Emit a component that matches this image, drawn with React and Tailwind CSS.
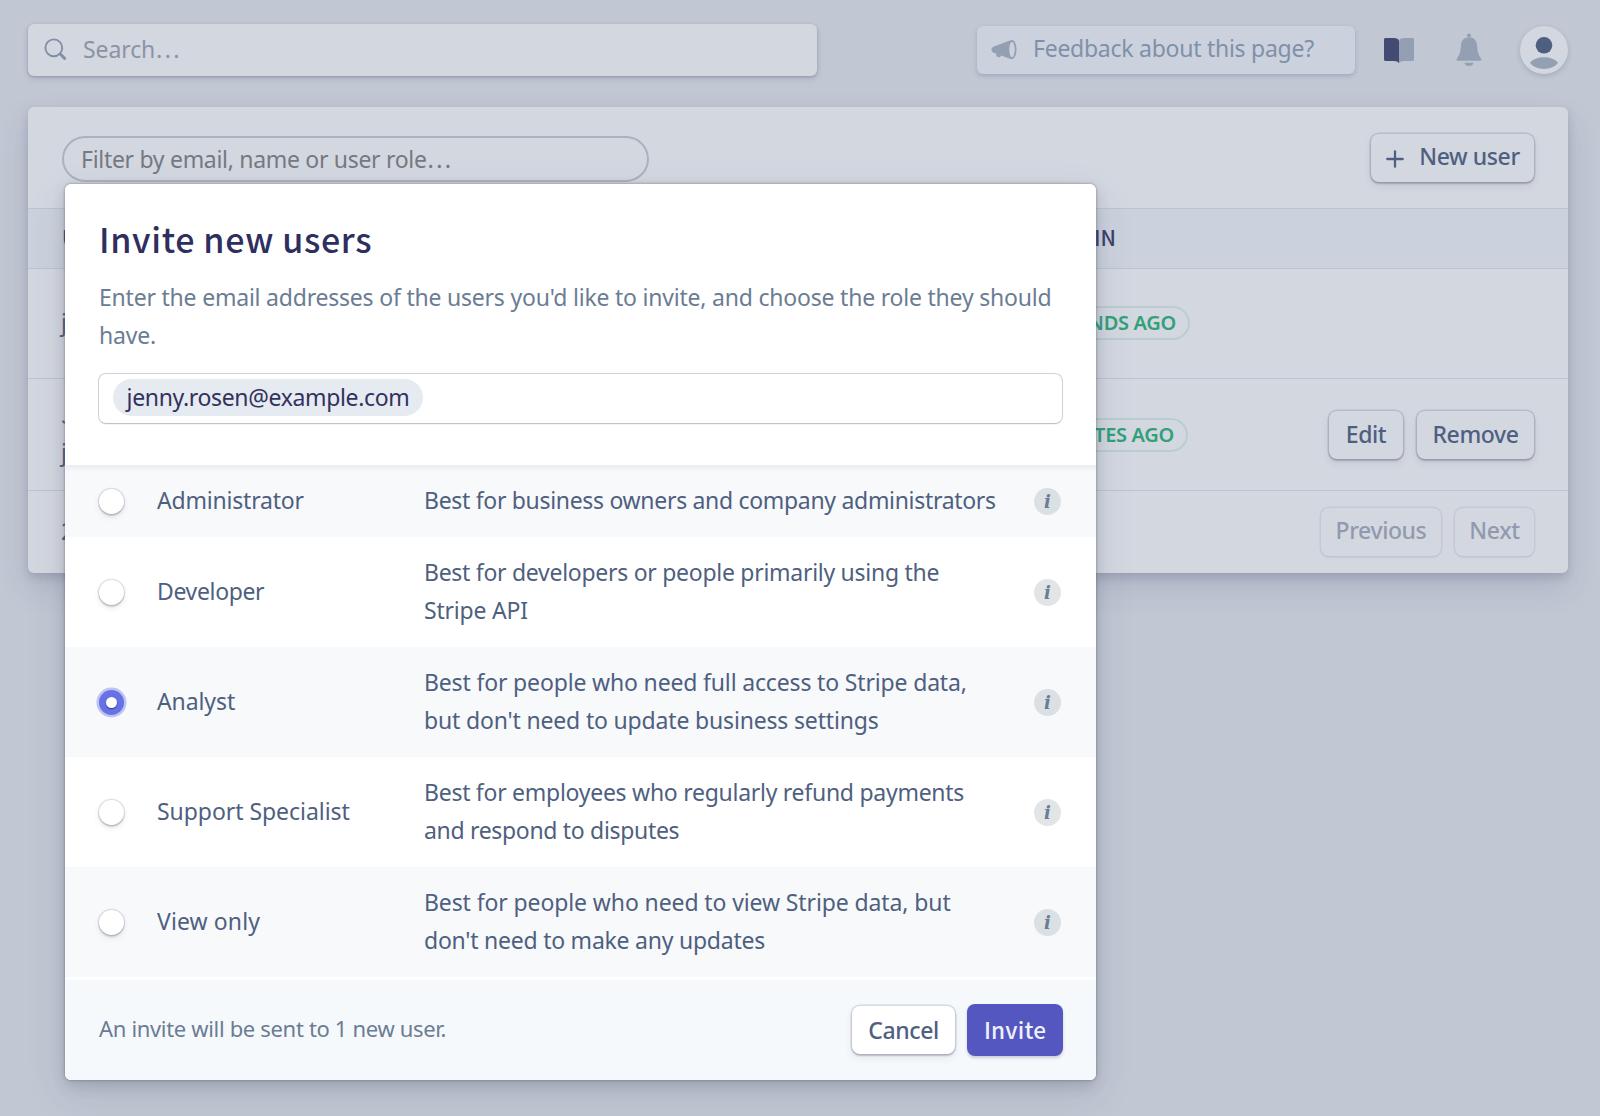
import React from "react";

const ROLES = [
  {
    name: "Administrator",
    nameTracking: "tracking-[-0.2px]",
    lines: [["Best for business owners and company administrators", "tracking-[-0.31px]"]],
  },
  {
    name: "Developer",
    nameTracking: "tracking-[-0.35px]",
    lines: [
      ["Best for developers or people primarily using the", "tracking-[-0.28px]"],
      ["Stripe API", "tracking-[-0.2px]"],
    ],
  },
  {
    name: "Analyst",
    nameTracking: "tracking-[-0.1px]",
    selected: true,
    lines: [
      ["Best for people who need full access to Stripe data,", "tracking-[-0.16px]"],
      ["but don't need to update business settings", "tracking-[-0.17px]"],
    ],
  },
  {
    name: "Support Specialist",
    nameTracking: "tracking-[-0.05px]",
    lines: [
      ["Best for employees who regularly refund payments", "tracking-[-0.27px]"],
      ["and respond to disputes", "tracking-[-0.32px]"],
    ],
  },
  {
    name: "View only",
    nameTracking: "tracking-[0.1px]",
    lines: [
      ["Best for people who need to view Stripe data, but", "tracking-[-0.11px]"],
      ["don't need to make any updates", "tracking-[-0.24px]"],
    ],
  },
];

function SearchIcon() {
  return (
    <svg className="h-6 w-6 shrink-0" viewBox="0 0 24 24" fill="none" stroke="#8090a8" strokeLinecap="round">
      <circle cx="9.8" cy="9.8" r="8.4" strokeWidth="1.9" />
      <path d="M16.5 16.300 20.600 20.400" strokeWidth="3" />
    </svg>
  );
}

function MegaphoneIcon() {
  return (
    <svg className="h-6 w-[26px] shrink-0" viewBox="0 0 26 24">
      <path
        fill="#93a0b3"
        d="M20.8 2c2.7 0 4.7 4.2 4.7 9.6s-2 9.6-4.7 9.6c-.7 0-1.3-.2-2-.5L10 17.600l-.6 1.100c-.3.6-.9.8-1.500.6l-2-.8c-.6-.2-.9-.9-.7-1.500l.300-1.200-2.200-.900C1.700 14.300.4 13.200.4 11.700s1-2.400 2.500-3.200L19 2.500c.6-.3 1.200-.5 1.800-.5z"
      />
      <ellipse cx="21" cy="11.600" rx="2.700" ry="7.600" fill="#cbd2dd" />
    </svg>
  );
}

function BookIcon() {
  return (
    <svg className="h-[27px] w-[30px]" viewBox="0 0 30 27">
      <path fill="#444b73" d="M1.500 1H10c2.500 0 5 1.200 5 3.200V26.200c-1-1.500-2.500-2.200-5-2.200H1.500C.7 24 0 23.300 0 22.500v-20C0 1.700.7 1 1.500 1z" />
      <path fill="#93a0b3" d="M28.500 1H20c-2.500 0-5 1.200-5 3.200V26.200c1-1.500 2.500-2.200 5-2.200h8.500c.8 0 1.500-.7 1.500-1.500v-20c0-.8-.7-1.500-1.500-1.500z" />
    </svg>
  );
}

function BellIcon() {
  return (
    <svg className="h-[34px] w-[26px]" viewBox="0 0 26 34" fill="#93a0b3">
      <circle cx="13" cy="2.500" r="2" />
      <path d="M13 4.300c4.800 0 7.600 3.300 8 7.700.500 6 1 9.500 4 13.400.9 1.300.5 2.300-.8 2.300H1.800c-1.300 0-1.700-1-.8-2.300 3-3.900 3.500-7.400 4-13.400.4-4.400 3.200-7.700 8-7.700z" />
      <path d="M8.300 29.700h9.400c-.5 2-2.400 3.300-4.700 3.300s-4.200-1.300-4.700-3.300z" />
    </svg>
  );
}

function Avatar() {
  return (
    <svg className="h-12 w-12 rounded-full shadow-[0_2px_5px_rgba(60,66,87,0.2)]" viewBox="0 0 48 48">
      <circle cx="24" cy="24" r="24" fill="#d3d7e0" />
      <circle cx="24" cy="19.300" r="8.300" fill="#4f5f80" />
      <path fill="#93a0b3" d="M10 36.800C13 33 18 31.200 24 31.200s11 1.800 14 5.600c-3 4-8 6.200-14 6.200s-11-2.200-14-6.200z" />
    </svg>
  );
}

function PlusIcon() {
  return (
    <svg className="h-[18px] w-[18px]" viewBox="0 0 18 18" stroke="#4f5f80" strokeWidth="2.300" strokeLinecap="round">
      <path d="M9 1.300v15.400M1.300 9h15.400" />
    </svg>
  );
}

function Ellipsis() {
  return <span className="font-['Noto_Sans_CJK_SC',sans-serif] leading-none">…</span>;
}

function Radio({ selected }) {
  if (selected) {
    return (
      <span className="flex h-[25px] w-[25px] shrink-0 items-center justify-center rounded-full bg-[#6772e5] shadow-[0_0_0_2.5px_rgba(103,114,229,0.4)]">
        <span className="h-[11px] w-[11px] rounded-full bg-white shadow-[0_1px_1.5px_rgba(20,20,80,0.6)]" />
      </span>
    );
  }
  return (
    <span className="h-[25px] w-[25px] shrink-0 rounded-full bg-white shadow-[0_0_0_1.2px_rgba(60,66,87,0.14),0_2px_2px_rgba(0,0,0,0.14),0_3px_6px_rgba(60,66,87,0.1)]" />
  );
}

function InfoBadge() {
  return (
    <span className="flex h-[27px] w-[27px] shrink-0 items-center justify-center rounded-full bg-[#8796a0]/25 font-['DejaVu_Serif',serif] text-[18px] leading-[27px] font-bold text-[#6b7c93] italic">
      i
    </span>
  );
}

const BUTTON = "flex h-12 items-center justify-center rounded-lg text-[23px] font-medium tracking-[-0.4px] text-[#4f5f80] ";
const RAISED = "shadow-[0_0_0_1.5px_rgba(60,50,90,0.15),0_2px_2px_rgba(30,20,60,0.17),0_4px_8px_rgba(60,66,87,0.09)] ";
const FLAT = "shadow-[0_0_0_1.5px_rgba(60,50,90,0.14),0_2px_2px_rgba(30,20,60,0.05)] ";

function Button({ className, disabled, children }) {
  return <button className={BUTTON + (disabled ? FLAT : RAISED) + className}>{children}</button>;
}

function Badge({ children }) {
  return (
    <span className="flex h-[34px] items-center rounded-full border-2 border-[#bbcdd0] px-[12px] text-[20px] font-semibold tracking-[-0.3px] text-[#31a07b]">
      {children}
    </span>
  );
}

function TopBar() {
  return (
    <header className="flex h-[107px] items-start pr-8 pl-7">
      <div className="mt-6 flex h-[52px] w-[789px] items-center gap-[15px] rounded-md bg-[#d3d7e0] pl-4 shadow-[0_1px_3px_rgba(60,66,107,0.3),0_3px_6px_rgba(60,66,107,0.12)]">
        <SearchIcon />
        <span className="pb-[3px] text-[23px] leading-8 tracking-[-0.1px] text-[#8c93a5]">
          Search
          <Ellipsis />
        </span>
      </div>
      <div className="mt-[26px] ml-[160px] flex h-12 w-[378px] items-center gap-[16px] rounded-md bg-[#cbd2dd] pl-[14px] shadow-[0_2px_4px_rgba(60,66,107,0.22)]">
        <MegaphoneIcon />
        <span className="pb-[4px] text-[23px] tracking-[-0.26px] text-[#8090a8]">Feedback about this page?</span>
      </div>
      <div className="mt-[26px] ml-[29px] flex h-12 flex-1 items-center">
        <BookIcon />
        <span className="ml-[42px]">
          <BellIcon />
        </span>
        <span className="ml-auto">
          <Avatar />
        </span>
      </div>
    </header>
  );
}

function UsersCard() {
  return (
    <section className="mr-8 ml-7 flex h-[466px] flex-col rounded-md bg-[#d3d7e0] text-[23px] text-[#4f5f80] shadow-[0_14px_30px_rgba(60,66,107,0.15),0_4px_9px_rgba(40,46,80,0.17)]">
      <div className="flex h-[101px] items-start justify-between pr-[34px] pl-[34px]">
        <div className="mt-[29px] flex h-[46px] w-[587px] items-center rounded-full border-2 border-[#acb1be] pb-[1px] pl-[17px] leading-8 tracking-[-0.3px] text-[#757982]">
          <span>
            Filter by email, name or user role
            <Ellipsis />
          </span>
        </div>
        <Button className="mt-[27px] w-[163px] gap-[15px] pb-[3px] pl-px">
          <span className="pt-1">
            <PlusIcon />
          </span>
          <span>New user</span>
        </Button>
      </div>
      <div className="flex h-[61px] items-center border-y-[1.5px] border-[#bcc4d2] bg-[#cbd2dd] pb-[2px] pl-[34px] font-['Noto_Sans_CJK_SC',sans-serif] text-[21px] font-medium text-[#3d4068]">
        <div className="flex w-[1054px] justify-between">
          <span>USER</span>
          <span>LAST LOGIN</span>
        </div>
      </div>
      <div className="flex h-[110px] items-center border-b-[1.5px] border-[#bcc4d2] pb-[2px] pl-[33px]">
        <div className="flex w-[1129px] items-center justify-between">
          <span>jenny.rosen@example.com</span>
          <Badge>46 SECONDS AGO</Badge>
        </div>
      </div>
      <div className="flex h-[112px] items-center border-b-[1.5px] border-[#bcc4d2] pr-[34px] pl-[33px]">
        <div className="flex w-[1127px] items-center justify-between">
          <span className="flex flex-col pb-[3px] leading-[38px]">
            <span className="font-['Noto_Sans_CJK_SC',sans-serif]">Jane Diaz</span>
            <span>jane.diaz@example.com</span>
          </span>
          <Badge>41 MINUTES AGO</Badge>
        </div>
        <div className="ml-auto flex gap-[14px]">
          <Button className="w-[74px]">Edit</Button>
          <Button className="w-[117px]">Remove</Button>
        </div>
      </div>
      <div className="flex flex-1 items-center justify-between pr-[34px] pb-px pl-[33px]">
        <span>2 users</span>
        <div className="flex gap-[14px] opacity-50">
          <Button disabled className="w-[120px] pb-[3px]">
            Previous
          </Button>
          <Button disabled className="w-[79px] pb-[3px]">
            Next
          </Button>
        </div>
      </div>
    </section>
  );
}

function RoleRow({ role, index }) {
  return (
    <li className={"flex items-center pt-[16px] pr-[35px] pb-[18px] pl-[34px] " + (index % 2 === 0 ? "bg-[#f7f9fb]" : "bg-white")}>
      <span className="flex pt-[2px]">
        <Radio selected={role.selected} />
      </span>
      <span className={"ml-[33px] w-[267px] leading-[38px] " + role.nameTracking}>{role.name}</span>
      <span className="flex flex-1 flex-col leading-[38px] whitespace-nowrap">
        {role.lines.map(([text, tracking]) => (
          <span key={text} className={tracking}>
            {text}
          </span>
        ))}
      </span>
      <span className="flex pt-[2px]">
        <InfoBadge />
      </span>
    </li>
  );
}

function InviteDialog() {
  return (
    <div className="absolute top-[184px] left-[65px] h-[896px] w-[1031px] rounded-md shadow-[0_0_2px_1px_rgba(60,66,87,0.26),0_6px_14px_rgba(60,66,87,0.2),0_14px_40px_rgba(60,66,87,0.12)]">
      <div className="flex h-full flex-col overflow-hidden rounded-md bg-white text-[23px] text-[#4f5f80]">
        <div className="h-[281px] px-[33px]">
          <h1 className="pt-[31px] pl-px font-['Noto_Sans_CJK_SC',sans-serif] text-[34px] leading-[48px] font-medium tracking-[0.65px] text-[#2f2f5f]">
            Invite new users
          </h1>
          <p className="mt-[15px] pl-px leading-[38px] tracking-[-0.21px] whitespace-nowrap text-[#6b7c93]">
            Enter the email addresses of the users you'd like to invite, and choose the role they should
            <br />
            have.
          </p>
          <div className="mt-[19px] flex h-[51px] items-start rounded-lg border-[1.5px] border-[#d0d0da] border-b-[#c2c2cd] pt-[5px] pl-[14px] shadow-[0_1px_1px_rgba(60,66,87,0.06)]">
            <span className="flex h-[37px] w-[310px] items-center justify-center rounded-full bg-[#e6eaf1] pb-[1px] tracking-[-0.35px] text-[#32325d]">
              jenny.rosen@example.com
            </span>
          </div>
        </div>
        <div className="relative">
          <ul>
            {ROLES.map((role, i) => (
              <RoleRow key={role.name} role={role} index={i} />
            ))}
          </ul>
          <div className="absolute inset-x-0 top-0 h-[7px] bg-linear-to-b from-[#e3e9ee]/70 to-transparent" />
        </div>
        <div className="mt-[3px] flex flex-1 items-center bg-[#f5f9fc] pr-[33px] pl-[34px]">
          <span className="pb-[3px] text-[22px] tracking-[-0.33px] text-[#6b7c93]">An invite will be sent to 1 new user.</span>
          <Button className="ml-auto w-[103px] bg-white">Cancel</Button>
          <button className="ml-[12px] flex h-[52px] w-[96px] items-center justify-center rounded-lg bg-[#5457bf] font-['Noto_Sans_CJK_SC',sans-serif] text-[22.500px] font-medium tracking-[0.2px] text-[#eef0fb] shadow-[0_2px_3px_rgba(50,50,93,0.22)]">
            Invite
          </button>
        </div>
      </div>
    </div>
  );
}

export default function App() {
  return (
    <div className="relative h-[1116px] w-[1600px] overflow-hidden bg-[#c1c7d3] font-['Noto_Sans',sans-serif]">
      <TopBar />
      <UsersCard />
      <InviteDialog />
    </div>
  );
}
